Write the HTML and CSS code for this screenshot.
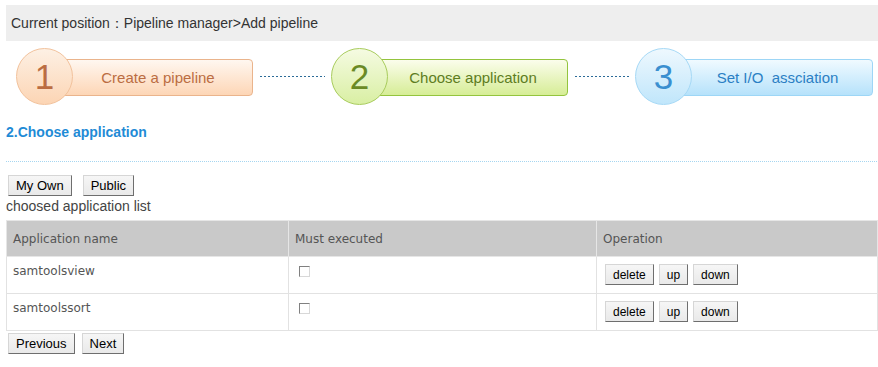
FILE: index.html
```html
<!DOCTYPE html>
<html lang="en">
<head>
    <meta charset="UTF-8">
    <meta name="viewport" content="width=device-width, initial-scale=1.0">
    <title>Add pipeline</title>
    <link rel="stylesheet" href="styles.css">
</head>
<body>
    <div class="crumb">Current position：Pipeline manager&gt;Add pipeline</div>

    <div class="steps">
        <div class="step step-orange">
            <div class="step-num">1</div>
            <div class="step-label">Create a pipeline</div>
        </div>
        <div class="connector"><span class="line"></span></div>
        <div class="step step-green">
            <div class="step-num">2</div>
            <div class="step-label">Choose application</div>
        </div>
        <div class="connector"><span class="line"></span></div>
        <div class="step step-blue">
            <div class="step-num">3</div>
            <div class="step-label">Set I/O&nbsp; assciation</div>
        </div>
    </div>

    <div class="section-title">2.Choose application</div>

    <div class="tabs">
        <button class="btn">My Own</button>
        <button class="btn btn-gap">Public</button>
    </div>
    <div class="caption">choosed application list</div>

    <table class="app-table">
        <thead>
            <tr>
                <th class="col-name">Application name</th>
                <th class="col-must">Must executed</th>
                <th>Operation</th>
            </tr>
        </thead>
        <tbody>
            <tr>
                <td>samtoolsview</td>
                <td><input type="checkbox" class="check"></td>
                <td>
                    <div class="ops">
                        <button class="btn btn-small">delete</button>
                        <button class="btn btn-small">up</button>
                        <button class="btn btn-small">down</button>
                    </div>
                </td>
            </tr>
            <tr>
                <td>samtoolssort</td>
                <td><input type="checkbox" class="check"></td>
                <td>
                    <div class="ops">
                        <button class="btn btn-small">delete</button>
                        <button class="btn btn-small">up</button>
                        <button class="btn btn-small">down</button>
                    </div>
                </td>
            </tr>
        </tbody>
    </table>

    <div class="pager">
        <button class="btn">Previous</button>
        <button class="btn btn-next">Next</button>
    </div>
</body>
</html>
```

FILE: styles.css
```css
html, body {
    overflow: hidden;
}

body {
    margin: 0;
    padding: 5px 0 0 6px;
    font-family: "Liberation Sans", Arial, sans-serif;
    font-size: 14px;
    color: #333;
    background: #fff;
}

.crumb {
    height: 36px;
    line-height: 36px;
    padding-left: 5px;
    background-color: #eeeeee;
    color: #333;
}

/* wizard steps */
.steps {
    display: grid;
    grid-template-columns: 237px 78px 237px 67px 238px;
    margin-top: 7px;
    padding-left: 10px;
    height: 56px;
}

.step {
    display: flex;
    align-items: flex-start;
}

.step-num {
    position: relative;
    z-index: 1;
    flex: none;
    width: 55px;
    height: 55px;
    border-radius: 50%;
    border: 1px solid;
    font-size: 35px;
    line-height: 55px;
    text-align: center;
}

.step-label {
    flex: 1;
    margin-top: 11px;
    margin-left: -28px;
    height: 35px;
    line-height: 35px;
    padding: 0 10px 0 28px;
    border: 1px solid;
    border-radius: 4px;
    font-size: 15px;
    text-align: center;
}

.step-orange .step-num {
    color: #bb6d42;
    border-color: #f2c29c;
    background: linear-gradient(#fdf0e4, #fcd5b4);
}

.step-orange .step-label {
    color: #bb6d42;
    border-color: #eab48c;
    background: linear-gradient(#fff7f0, #fdd6b6);
}

.step-green .step-num {
    color: #6a8a25;
    border-color: #a8cc5c;
    background: linear-gradient(#f5fbe2, #d9efa3);
}

.step-green .step-label {
    color: #5e7d1f;
    border-color: #94c43e;
    background: linear-gradient(#fbfdec, #d6ed96);
}

.step-blue .step-num {
    color: #3a8fd0;
    border-color: #a6d9f6;
    background: linear-gradient(#eef8fe, #c0e6fb);
}

.step-blue .step-label {
    color: #2b7fc4;
    border-color: #9dd6f6;
    background: linear-gradient(#f0faff, #b6e2fb);
}

.connector {
    display: flex;
    align-items: center;
    padding: 0 6px 0 7px;
}

.line {
    flex: 1;
    height: 1px;
    background: repeating-linear-gradient(to right, #2b6b98 0 2px, transparent 2px 4px);
}

/* section */
.section-title {
    margin-top: 20px;
    line-height: 16px;
    padding-bottom: 22px;
    font-weight: bold;
    color: #1f8bd6;
    background: repeating-linear-gradient(to right, #a6d6f0 0 1px, transparent 1px 2px) left bottom / 100% 1px no-repeat;
}

.tabs {
    display: flex;
    margin-top: 13px;
    padding-left: 2px;
}

.btn {
    height: 21px;
    padding: 0 7px;
    font-family: "Liberation Sans", Arial, sans-serif;
    font-size: 13px;
    color: #000;
    background: linear-gradient(#f6f6f6, #e9e9e9);
    border: 1px solid;
    border-color: #d6d6d6 #6e6e6e #6e6e6e #d6d6d6;
    border-radius: 0;
    cursor: pointer;
}

.btn-gap {
    margin-left: 11px;
}

.caption {
    margin: 2px 0 5px;
    line-height: 17px;
    color: #444;
}

/* table */
.app-table {
    width: 100%;
    border-collapse: collapse;
    font-family: "DejaVu Sans", Verdana, sans-serif;
    font-size: 12px;
    color: #555;
}

.app-table th,
.app-table td {
    border: 1px solid #e2e2e2;
    text-align: left;
    vertical-align: top;
}

.app-table th {
    height: 35px;
    padding: 0 6px;
    vertical-align: middle;
    font-weight: normal;
    background-color: #c9c9c9;
    border-color: #e6e6e6;
}

.app-table td {
    height: 21px;
    padding: 7px 5px 8px 6px;
}

.col-name {
    width: 269px;
}

.col-must {
    width: 295px;
}

.check {
    appearance: none;
    -webkit-appearance: none;
    width: 11px;
    height: 11px;
    margin: 2px 0 0 4px;
    border: 1px solid;
    border-color: #808080 #d8d8d8 #d8d8d8 #808080;
    background: #fff;
}

.ops {
    display: flex;
    gap: 5px;
    padding-left: 2px;
}

.btn-small {
    font-size: 12px;
    padding: 0 7px;
}

.pager {
    display: flex;
    margin-top: 2px;
    padding-left: 2px;
}

.btn-next {
    margin-left: 7px;
}
```
